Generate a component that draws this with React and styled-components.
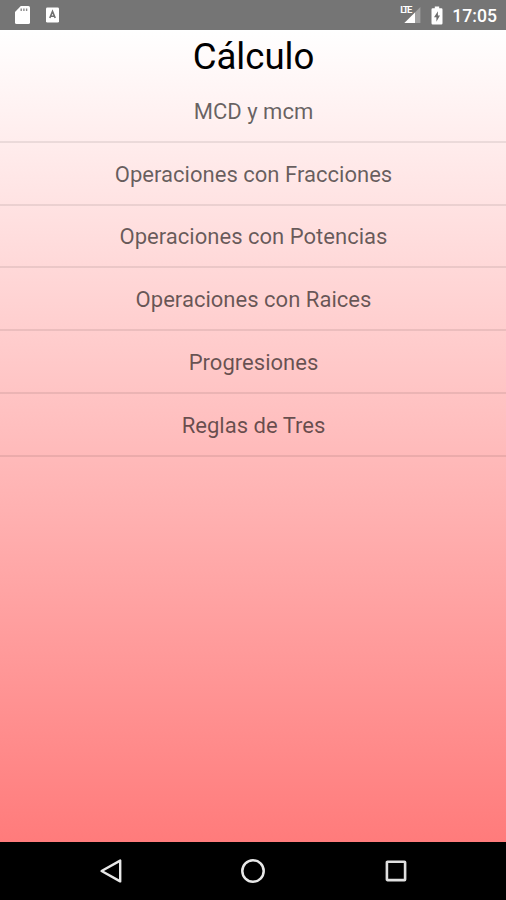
import React from 'react'
import styled, { createGlobalStyle } from 'styled-components'

const topics = [
  'MCD y mcm',
  'Operaciones con Fracciones',
  'Operaciones con Potencias',
  'Operaciones con Raices',
  'Progresiones',
  'Reglas de Tres',
]

const SdCardIcon = () => (
  <svg width="18" height="20" viewBox="0 0 18 20">
    <path d="M6.8 1H14.4Q16 1 16 2.6V17.4Q16 19 14.4 19H2.6Q1 19 1 17.4V7Z" fill="#fff" />
    <path d="M7.2 3.6V6M9.9 3.6V6M12.6 3.6V6" stroke="#8a8a8a" strokeWidth="1.4" />
  </svg>
)

const KeyboardIcon = () => (
  <svg width="16" height="18" viewBox="0 0 16 18">
    <rect x="1" y="1.4" width="13" height="15.2" rx="1.4" fill="#fff" />
    <path d="M4.8 12L7.5 5.4L10.2 12M5.8 10.2H9.2" fill="none" stroke="#707070" strokeWidth="1.6" />
  </svg>
)

const SignalIcon = () => (
  <svg width="18" height="18" viewBox="0 0 18 18">
    <path d="M17.4 1V17H1.4Z" fill="#a0a0a0" />
    <path d="M12 6.4V17H1.4Z" fill="#fff" />
  </svg>
)

const BatteryIcon = () => (
  <svg width="12" height="19" viewBox="0 0 12 19">
    <path d="M3.8 0.5H8.2V2.3H10.3Q11.5 2.3 11.5 3.5V17.3Q11.5 18.5 10.3 18.5H1.7Q0.5 18.5 0.5 17.3V3.5Q0.5 2.3 1.7 2.3H3.8Z" fill="#fff" />
    <path d="M6.9 5.2L3 11.3H5.4V15.8L9 9.6H6.9Z" fill="#6f6f6f" />
  </svg>
)

const App = () => {
  return (
    <>
      <GlobalStyle />
      <Screen>
        <StatusBar>
          <StatusLeft>
            <SdCardIcon />
            <KeyboardIcon />
          </StatusLeft>
          <StatusRight>
            <Signal>
              <SignalIcon />
              <Network>LTE</Network>
            </Signal>
            <BatteryIcon />
            <Clock>17:05</Clock>
          </StatusRight>
        </StatusBar>
        <Content>
          <Title>Cálculo</Title>
          <List>
            {topics.map((topic) => (
              <Item key={topic}>{topic}</Item>
            ))}
          </List>
        </Content>
        <NavBar>
          <NavButton aria-label="back">
            <svg width="24" height="28" viewBox="0 0 24 28">
              <path d="M21.2 3.6V24.4L2.6 14Z" fill="none" stroke="#e8e8e8" strokeWidth="2.4" strokeLinejoin="round" />
            </svg>
          </NavButton>
          <NavButton aria-label="home">
            <svg width="28" height="28" viewBox="0 0 28 28">
              <circle cx="14" cy="14" r="10.7" fill="none" stroke="#e8e8e8" strokeWidth="2.5" />
            </svg>
          </NavButton>
          <NavButton aria-label="recent">
            <svg width="28" height="28" viewBox="0 0 28 28">
              <rect x="4.9" y="4.7" width="18.2" height="18.4" rx="0.6" fill="none" stroke="#e0e0e0" strokeWidth="2.6" />
            </svg>
          </NavButton>
        </NavBar>
      </Screen>
    </>
  )
}

export default App

const GlobalStyle = createGlobalStyle`
  * {
    box-sizing: border-box;
  }
  body {
    margin: 0;
    font-family: Roboto, sans-serif;
  }
`
const Screen = styled.div`
  display: flex;
  flex-direction: column;
  width: 100%;
  height: 100vh;
  overflow: hidden;
`
const StatusBar = styled.header`
  display: flex;
  justify-content: space-between;
  height: 30px;
  flex-shrink: 0;
  padding: 0 9px 0 14px;
  background: #757575;
`
const StatusLeft = styled.div`
  display: flex;
  align-items: center;
  gap: 13px;
`
const StatusRight = styled.div`
  display: flex;
  align-items: center;
`
const Signal = styled.div`
  position: relative;
  display: flex;
  margin-right: 10px;
`
const Network = styled.span`
  position: absolute;
  top: -1px;
  left: -3px;
  font-size: 9.5px;
  font-weight: 700;
  line-height: 10px;
  letter-spacing: -1.7px;
  color: #fff;
`
const Clock = styled.span`
  margin-left: 9px;
  padding-top: 2px;
  font-size: 17.6px;
  font-weight: 500;
  line-height: 22px;
  color: #fff;
`
const Content = styled.main`
  flex: 1;
  background: linear-gradient(#ffffff, #ff7b7b);
`
const Title = styled.h1`
  margin: 0;
  padding: 4px 0 0 1px;
  height: 50px;
  font-size: 36.6px;
  font-weight: 400;
  line-height: 46px;
  text-align: center;
  color: #000;
`
const List = styled.ul`
  margin: 0;
  padding: 0;
  list-style: none;
`
const Item = styled.li`
  display: flex;
  align-items: center;
  justify-content: center;
  height: 62.8px;
  padding: 2px 0 0 1px;
  border-bottom: 2px solid rgba(0, 0, 0, 0.08);
  font-size: 22.05px;
  color: rgba(0, 0, 0, 0.6);
`
const NavBar = styled.nav`
  display: flex;
  align-items: center;
  justify-content: space-between;
  height: 58px;
  flex-shrink: 0;
  padding: 0 96px 0 99px;
  background: #000;
`
const NavButton = styled.button`
  display: flex;
  padding: 0;
  border: none;
  background: none;
`
